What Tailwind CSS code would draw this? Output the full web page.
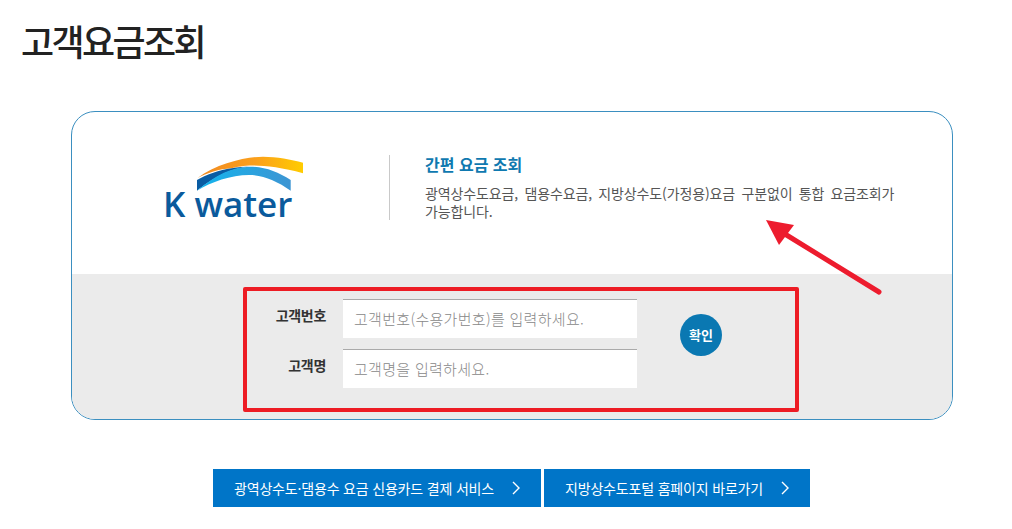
<!DOCTYPE html>
<html lang="ko">
<head>
<meta charset="utf-8">
<script src="https://cdn.jsdelivr.net/npm/@tailwindcss/browser@4"></script>
</head>
<body class="bg-white overflow-hidden font-['Noto_Sans_CJK_KR','Noto_Sans',sans-serif]">
<div class="relative w-[1012px] h-[529px]">
  <h1 class="pl-[21px] pt-[17px] h-[111px] text-[36px] leading-[46px] font-medium tracking-[-2.6px] text-[#222]">고객요금조회</h1>

  <section class="ml-[71px] w-[882px] h-[309px] border border-[#3b8fc0] rounded-[24px] overflow-hidden flex flex-col">
    <div class="h-[162px] flex">
      <div class="w-[317px] h-full flex items-start">
        <svg class="ml-[93px] mt-[43px] overflow-visible" width="140" height="70" viewBox="0 0 140 70">
          <defs>
            <linearGradient id="o" x1="0" x2="1" y1="0" y2="0"><stop offset="0" stop-color="#f08a24"/><stop offset="0.55" stop-color="#fb9f1c"/><stop offset="1" stop-color="#ffcc00"/></linearGradient>
            <linearGradient id="b" x1="0" x2="1" y1="0" y2="0"><stop offset="0" stop-color="#12b5ee"/><stop offset="1" stop-color="#3d95d3"/></linearGradient>
          </defs>
          <path d="M32.3 23.3 C52 8 82 1.7 98 1.7 C112 1.7 126 4.5 138 7.7 L138 18.3 C118 12.5 100 10.5 88 10.5 C78 10.5 72 12 66.7 13.3 C54 14 42 18 32.3 23.3Z" fill="url(#o)"/>
          <path d="M32 25 C42 19.5 54 15 66.7 13.3 C73 12 80 11.7 85 11.7 C66 12.5 46 24 32 35.7Z" fill="#0a5ca3"/>
          <path d="M32 35.7 C50 20 68 11.7 85 11.7 C100 11.7 113 17 125.7 25 L125.7 35.7 C112 26 98 20 84 20 C66 20 46 27 32 35.7Z" fill="url(#b)"/>
          <text x="-2" y="62" font-family="'Open Sans',sans-serif" font-weight="600" font-size="35" letter-spacing="0" fill="#0a5a9c">K water</text>
        </svg>
      </div>
      <div class="mt-[43px] w-px h-[65px] bg-[#c9c9c9]"></div>
      <div class="pl-[35px] pt-[40px] w-[510px]">
        <h2 class="text-[16px] leading-[24px] font-bold text-[#0f79b0]">간편 요금 조회</h2>
        <p class="mt-[8px] w-[480px] text-[14px] leading-[18px] text-[#555] tracking-[-0.12px] [word-spacing:2.5px]">광역상수도요금, 댐용수요금, 지방상수도(가정용)요금 구분없이 통합 요금조회가 가능합니다.</p>
      </div>
    </div>
    <div class="flex-1 bg-[#ebebeb] pl-[171px] pt-[13px]">
      <div class="w-[556px] h-[125px] border-[4px] border-[#ed1c24] rounded-[2px] flex pl-[24px] pt-[8px]">
        <div class="flex flex-col gap-[11px]">
          <label class="flex items-center">
            <span class="w-[55px] text-right text-[14px] font-bold text-[#333] tracking-[-0.3px] -mt-[6px] mr-[17px]">고객번호</span>
            <span class="w-[294px] h-[39px] bg-white border-t border-[#aaa] pl-[11px] flex items-center text-[15px] font-light tracking-[0.3px] text-[#888]">고객번호(수용가번호)를 입력하세요.</span>
          </label>
          <label class="flex items-center">
            <span class="w-[55px] text-right text-[14px] font-bold text-[#333] tracking-[-0.3px] -mt-[6px] mr-[17px]">고객명</span>
            <span class="w-[294px] h-[39px] bg-white border-t border-[#aaa] pl-[11px] flex items-center text-[15px] font-light tracking-[0.3px] text-[#888]">고객명을 입력하세요.</span>
          </label>
        </div>
        <button class="ml-[43px] mt-[15px] w-[42px] h-[42px] rounded-full bg-[#0a78b2] text-white text-[13px] font-bold">확인</button>
      </div>
    </div>
  </section>

  <div class="ml-[213px] mt-[49px] flex gap-[3px]">
    <a class="w-[328px] h-[38px] bg-[#0075c8] text-white text-[14px] tracking-[-0.18px] flex items-center pl-[21px] whitespace-nowrap">광역상수도·댐용수 요금 신용카드 결제 서비스
      <svg class="ml-[17px]" width="10" height="14" viewBox="0 0 10 14" fill="none" stroke="#fff" stroke-width="1.4"><path d="M2 1l6 6-6 6"/></svg>
    </a>
    <a class="w-[266px] h-[38px] bg-[#0075c8] text-white text-[14px] tracking-[-0.18px] flex items-center pl-[21px] whitespace-nowrap">지방상수도포털 홈페이지 바로가기
      <svg class="ml-[17px]" width="10" height="14" viewBox="0 0 10 14" fill="none" stroke="#fff" stroke-width="1.4"><path d="M2 1l6 6-6 6"/></svg>
    </a>
  </div>

  <svg class="absolute left-[760px] top-[215px]" width="130" height="85" viewBox="0 0 130 85">
    <path d="M119 77 L20 16" stroke="#ed1c2e" stroke-width="5" stroke-linecap="round" fill="none"/>
    <path d="M6 5 L34 10 L19 30 Z" fill="#ed1c2e"/>
  </svg>
</div>
</body>
</html>
